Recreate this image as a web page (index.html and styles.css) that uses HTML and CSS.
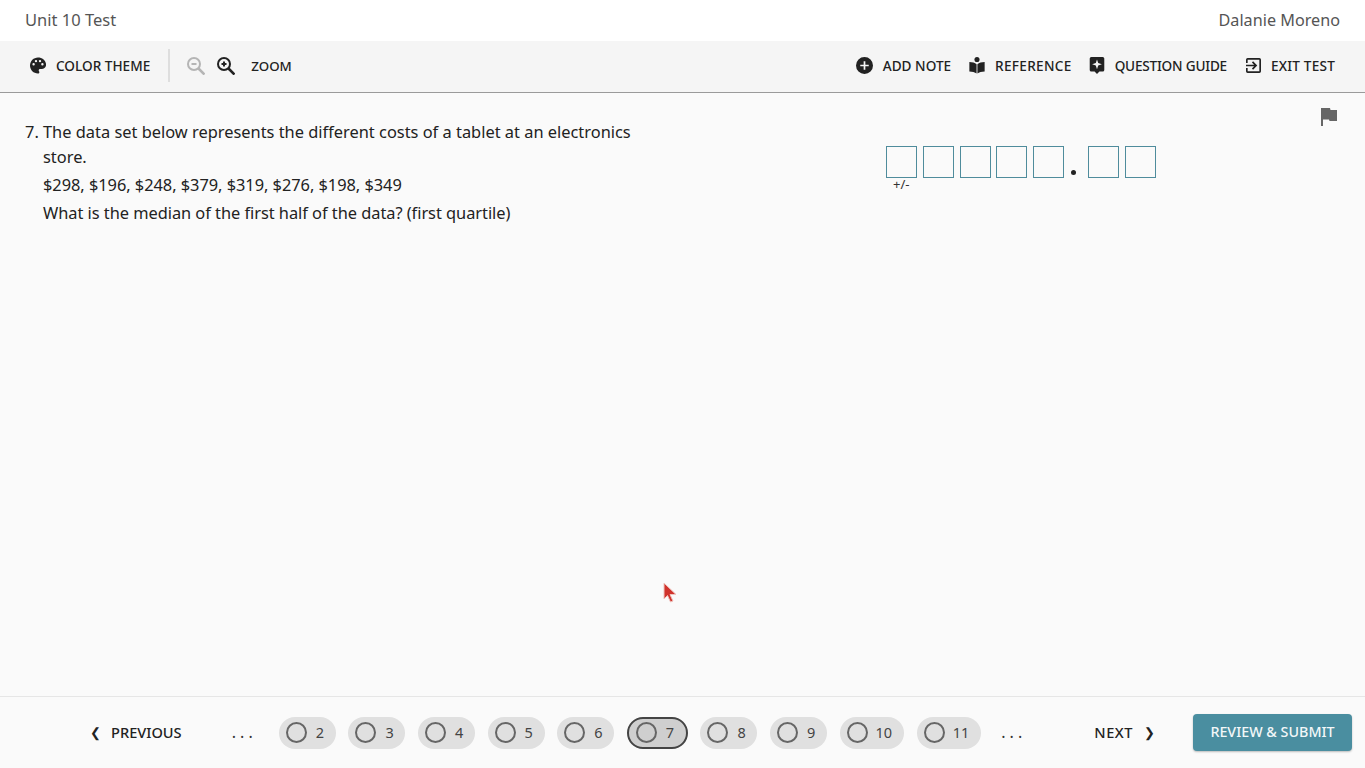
FILE: index.html
```html
<!DOCTYPE html>
<html lang="en">
<head>
<meta charset="utf-8">
<title>Unit 10 Test</title>
<link rel="stylesheet" href="styles.css">
</head>
<body>
<div class="app">
  <header class="topbar">
    <span class="test-name">Unit 10 Test</span>
    <span class="user-name">Dalanie Moreno</span>
  </header>
  <nav class="toolbar">
    <div class="tool-group">
      <button class="tool tool-theme">
        <svg class="icon" viewBox="2 2 20 20"><path d="M12 2C6.500 2 2 6.500 2 12s4.500 10 10 10c.9 0 1.700-.7 1.700-1.700 0-.4-.2-.8-.4-1.100-.3-.3-.4-.7-.4-1.100 0-.9.700-1.700 1.700-1.700h2c3 0 5.500-2.500 5.500-5.500C22 6 17.500 2 12 2zM6.500 12a1.500 1.500 0 1 1 0-3 1.500 1.500 0 0 1 0 3zm3-4a1.500 1.500 0 1 1 0-3 1.500 1.500 0 0 1 0 3zm5 0a1.500 1.500 0 1 1 0-3 1.500 1.500 0 0 1 0 3zm3 4a1.500 1.500 0 1 1 0-3 1.500 1.500 0 0 1 0 3z"/></svg>
        <span>COLOR THEME</span>
      </button>
      <div class="tool-sep"></div>
      <svg class="zoom-icon zoom-off" viewBox="1 1 18 18"><circle cx="8" cy="8" r="6"/><path class="zoom-handle" d="M12.500 12.500 18.500 18.500"/><path d="M5.500 8h5"/></svg>
      <svg class="zoom-icon zoom-on" viewBox="1 1 18 18"><circle cx="8" cy="8" r="6"/><path class="zoom-handle" d="M12.500 12.500 18.500 18.500"/><path d="M5.500 8h5M8 5.500v5"/></svg>
      <span class="tool-label zoom-label">ZOOM</span>
    </div>
    <div class="tool-group">
      <button class="tool">
        <svg class="icon" viewBox="2 2 20 20"><path d="M12 2a10 10 0 1 0 0 20 10 10 0 0 0 0-20zm5 11h-4v4h-2v-4H7v-2h4V7h2v4h4z"/></svg>
        <span>ADD NOTE</span>
      </button>
      <button class="tool tool-ref">
        <svg class="icon" viewBox="3 2 18 20"><circle cx="12" cy="5" r="3"/><path d="M3 8c3.500 0 6.500.8 8.500 2.500v11C9.500 20 6.500 19 3 19zM21 8c-3.500 0-6.500.8-8.500 2.500v11c2-1.500 5-2.500 8.500-2.500z"/></svg>
        <span>REFERENCE</span>
      </button>
      <button class="tool tool-guide">
        <svg class="icon" viewBox="3 2 18 21"><path fill-rule="evenodd" d="M5 2h14a2 2 0 0 1 2 2v14a2 2 0 0 1-2 2h-4l-3 3-3-3H5a2 2 0 0 1-2-2V4a2 2 0 0 1 2-2zm7 3-1.500 4.500L6 11l4.500 1.500L12 17l1.500-4.500L18 11l-4.500-1.500z"/></svg>
        <span>QUESTION GUIDE</span>
      </button>
      <button class="tool tool-exit">
        <svg class="icon" viewBox="3 3 18 18"><path d="M10.100 15.600 11.500 17l5-5-5-5-1.400 1.400 2.600 2.600H3v2h9.700zM19 3H5a2 2 0 0 0-2 2v4h2V5h14v14H5v-4H3v4a2 2 0 0 0 2 2h14a2 2 0 0 0 2-2V5a2 2 0 0 0-2-2z"/></svg>
        <span>EXIT TEST</span>
      </button>
    </div>
  </nav>
  <main class="content">
    <section class="question">
      <div class="q-line"><span class="q-num">7.</span><p>The data set below represents the different costs of a tablet at an electronics store.</p></div>
      <p class="q-para">$298, $196, $248, $379, $319, $276, $198, $349</p>
      <p class="q-para">What is the median of the first half of the data? (first quartile)</p>
    </section>
    <section class="answer">
      <div class="cell-wrap"><div class="cell"></div><span class="sign">+/-</span></div>
      <div class="cell"></div>
      <div class="cell"></div>
      <div class="cell"></div>
      <div class="cell"></div>
      <span class="dot"></span>
      <div class="cell"></div>
      <div class="cell"></div>
    </section>
    <svg class="flag" viewBox="0 0 16 18"><path d="M0 0h9l.5 2H16v11H8.500L8 11.500H2V18H0z"/></svg>
    <svg class="cursor" viewBox="0 0 15 22"><path d="M1 1v16l3.500-3.500 3 6.500 2.500-1-3-6.500h6z"/></svg>
  </main>
  <footer class="footer">
    <button class="nav-btn nav-prev"><span class="chev">❮</span>PREVIOUS</button>
    <span class="dots dots-left">. . .</span>
    <div class="pills">
      <div class="pill"><i></i><span>2</span></div>
      <div class="pill"><i></i><span>3</span></div>
      <div class="pill"><i></i><span>4</span></div>
      <div class="pill"><i></i><span>5</span></div>
      <div class="pill"><i></i><span>6</span></div>
      <div class="pill pill-active"><i></i><span>7</span></div>
      <div class="pill"><i></i><span>8</span></div>
      <div class="pill"><i></i><span>9</span></div>
      <div class="pill pill-wide"><i></i><span>10</span></div>
      <div class="pill pill-wide"><i></i><span>11</span></div>
    </div>
    <span class="dots dots-right">. . .</span>
    <button class="nav-btn nav-next">NEXT<span class="chev">❯</span></button>
    <button class="submit">REVIEW &amp; SUBMIT</button>
  </footer>
</div>
</body>
</html>
```
FILE: styles.css
```css
* { box-sizing: border-box; }
html, body { margin: 0; height: 100%; }
body { font-family: "Noto Sans", "Open Sans", sans-serif; color: #222; background: #fafafa; overflow: hidden; }
p { margin: 0; }
button { font: inherit; border: 0; background: none; padding: 0; color: inherit; }
.app { display: flex; flex-direction: column; height: 768px; }

.topbar { height: 41px; flex: none; background: #fff; display: flex; justify-content: space-between; align-items: center; padding: 0 25px 2px; color: #555; }
.test-name { font-size: 16.5px; }
.user-name { font-size: 16.2px; }

.toolbar { height: 52px; flex: none; background: #f5f5f5; border-bottom: 1px solid #9a9a9a; box-shadow: 0 1px 1px rgba(0,0,0,.08); display: flex; justify-content: space-between; align-items: center; padding: 0 30px 2px 30px; }
.tool-group { display: flex; align-items: center; }
.tool { display: flex; align-items: center; gap: 10px; font-size: 13.6px; font-weight: 500; color: #222; margin-left: 18px; }
.tool:first-child { margin-left: 0; }
.tool-ref span { letter-spacing: .3px; }
.tool-guide { margin-left: 17px; }
.tool-guide span { letter-spacing: -.2px; }
.tool-exit { margin-left: 19px; }
.tool-exit span { letter-spacing: .2px; }
.icon { width: 17px; height: 17px; fill: #222; flex: none; }
.tool-theme .icon, .tool-ref .icon, .tool-guide .icon { width: 16px; }
.tool-exit .icon { width: 15px; height: 15px; }
.tool-sep { width: 2px; height: 33px; background: #dedede; margin: 0 17px 0 18px; }
.zoom-icon { width: 18px; height: 18px; fill: none; stroke-width: 2; flex: none; }
.zoom-handle { stroke-width: 2.600; }
.zoom-off { stroke: #b5b5b5; margin-right: 12px; }
.zoom-on { stroke: #222; }
.tool-label { font-size: 13.3px; font-weight: 500; color: #222; }
.zoom-label { margin-left: 16px; }

.content { flex: 1; position: relative; background: #fafafa; display: flex; padding: 26px 25px 0; }
.question { width: 620px; font-size: 16.4px; line-height: 25px; color: #222; }
.q-line { display: flex; }
.q-num { width: 18px; flex: none; }
.q-para { margin: 3px 0 0 18px; letter-spacing: -.04px; }
.answer { margin: 27px 0 0 241px; display: flex; align-items: flex-start; gap: 5.75px; height: 34px; }
.cell { width: 31px; height: 32px; border: 1px solid #4f8c9c; background: #fafafa; }
.cell-wrap { position: relative; }
.sign { position: absolute; left: 7px; top: 30px; font-size: 13px; line-height: 16px; color: #333; }
.dot { width: 5px; height: 5px; border-radius: 50%; background: #222; margin: 24px 6.5px 0 1px; }
.flag { position: absolute; left: 1321px; top: 15px; width: 16px; height: 18px; fill: #666; }
.cursor { position: absolute; left: 663px; top: 489px; width: 15px; height: 22px; fill: #d0332c; stroke: #efc4be; stroke-width: 1; }

.footer { height: 72px; flex: none; background: #fafafa; border-top: 1px solid #e6e6e6; display: flex; align-items: center; padding: 0 13px 0 90px; }
.nav-btn { display: flex; align-items: center; font-size: 14.6px; font-weight: 500; color: #222; padding-bottom: 2px; }
.nav-next { letter-spacing: .5px; }
.chev { font-size: 13px; color: #222; }
.nav-prev .chev { margin-right: 10px; }
.nav-next .chev { margin-left: 11px; }
.dots { font-size: 16px; color: #333; padding-bottom: 2px; }
.dots-left { margin-left: 50px; margin-right: 26px; }
.dots-right { margin-left: 20px; margin-right: 72px; }
.pills { display: flex; align-items: center; gap: 12.6px; }
.pill { width: 57px; height: 32px; border-radius: 16px; background: #e0e0e0; display: flex; align-items: center; gap: 9px; padding: 0 0 0 7px; font-size: 14.5px; color: #444; }
.pill span { padding-bottom: 2px; }
.pill i { width: 21px; height: 21px; border-radius: 50%; border: 2px solid #666; flex: none; }
.pill-active { width: 61px; background: #cfcfcf; border: 2px solid #444; padding-left: 7px; }
.pill-wide { width: 64.500px; gap: 8px; }
.submit { margin-left: auto; width: 159px; height: 37px; border-radius: 4px; padding-bottom: 2px; background: #4a8ea0; color: #f2f7f8; font-size: 14.3px; font-weight: 500; box-shadow: 0 1px 2px rgba(0,0,0,.25); }
```
